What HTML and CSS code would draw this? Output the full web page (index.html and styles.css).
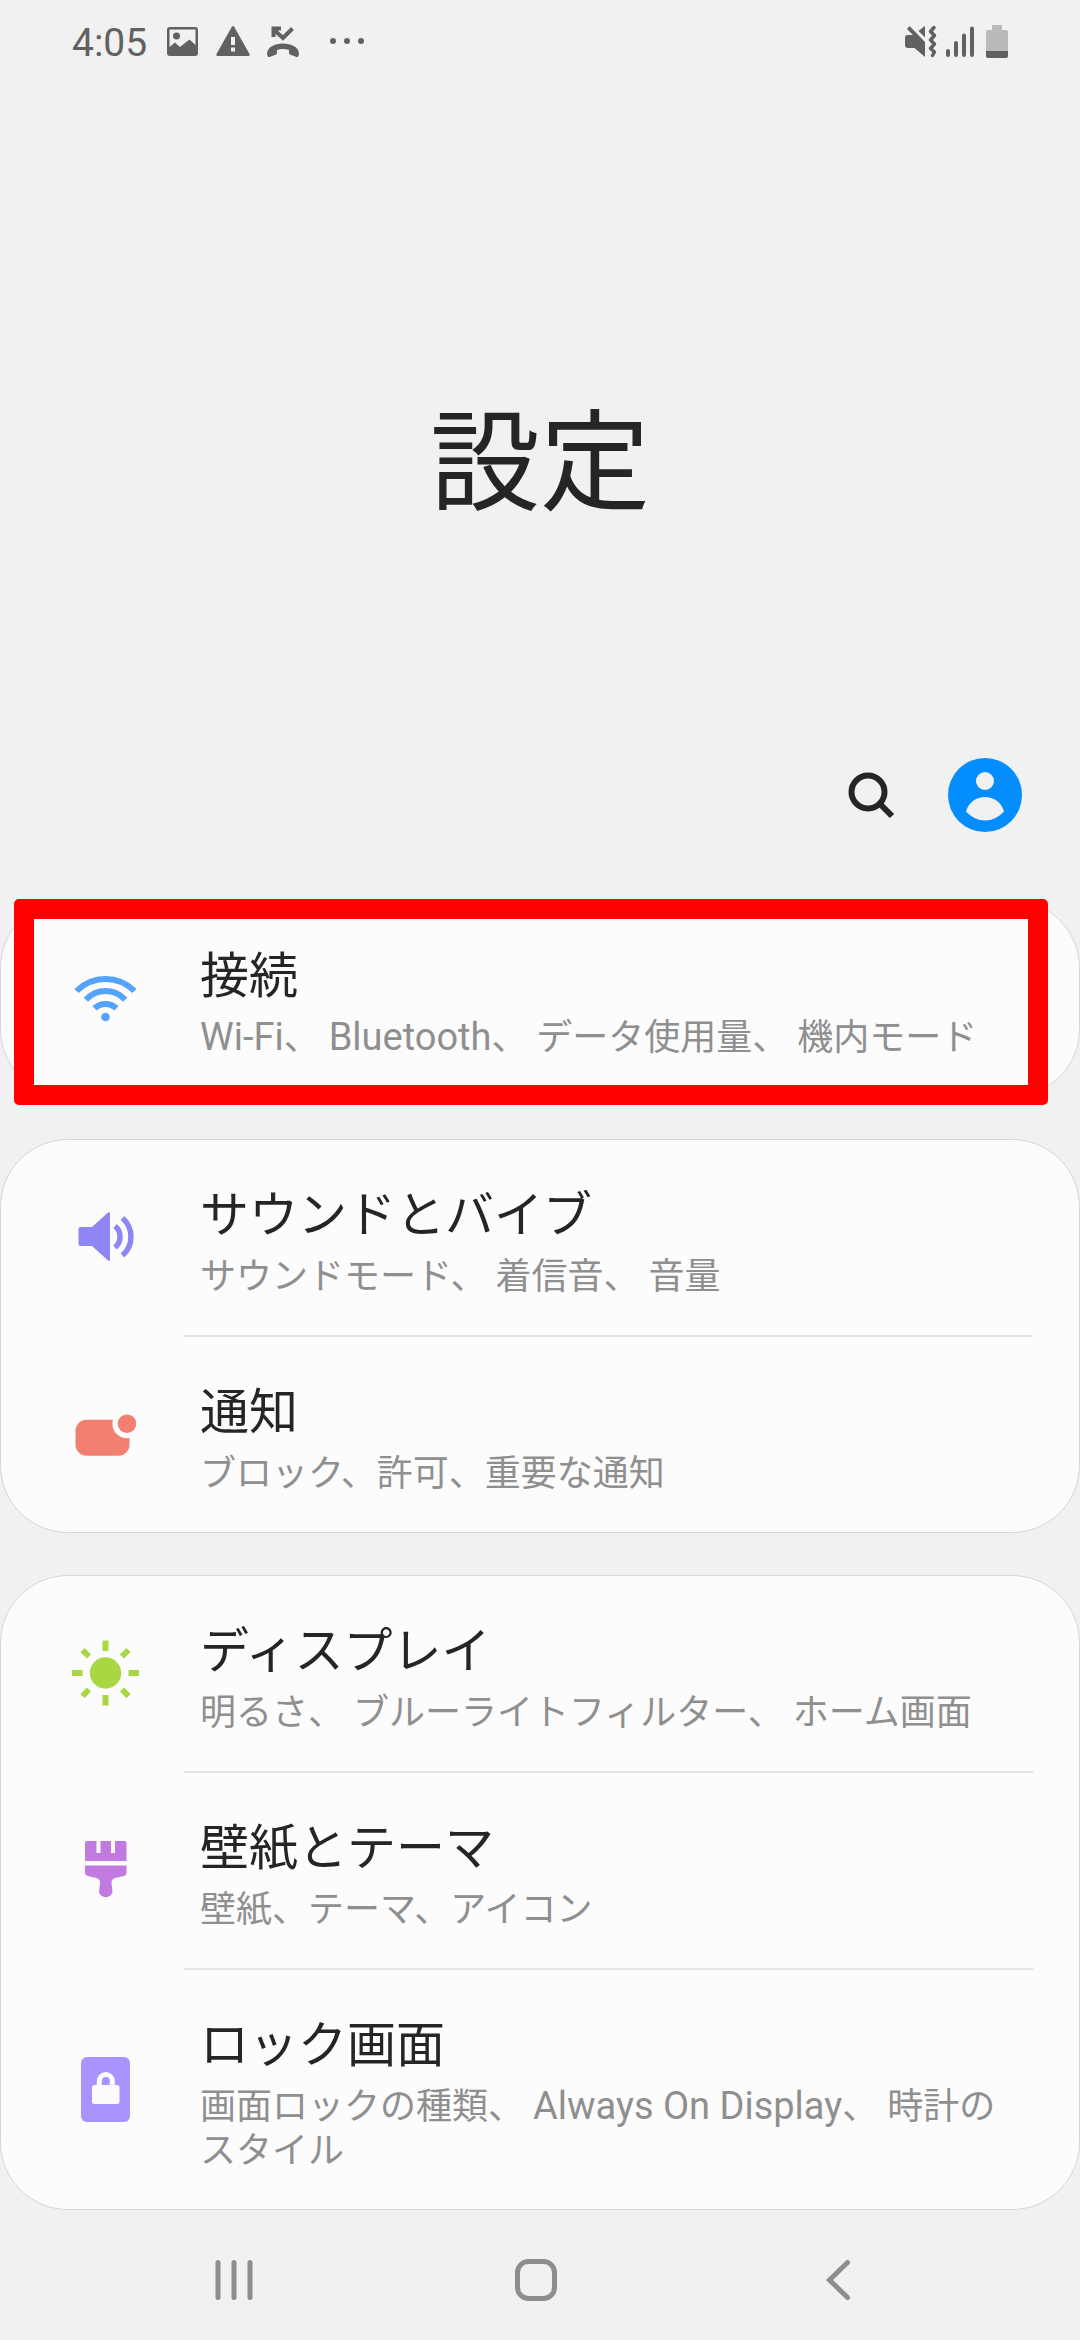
FILE: index.html
```html
<!DOCTYPE html>
<html lang="ja">
<head>
<meta charset="utf-8">
<meta name="viewport" content="width=device-width, initial-scale=1">
<title>設定</title>
<link rel="stylesheet" href="styles.css">
</head>
<body>
<div class="screen">
  <div class="status-bar">
    <span class="clock">4:05</span>
    <div class="status-left">
      <svg width="32" height="34" viewBox="0 0 32 34" aria-hidden="true">
        <path fill-rule="evenodd" d="M3 2H28a3 3 0 0 1 3 3V28a3 3 0 0 1-3 3H3a3 3 0 0 1-3-3V5a3 3 0 0 1 3-3ZM2.500 4.500V22L8 17.500 13 22 22.500 14.500 28.500 20V4.500Z"/>
        <circle cx="9.500" cy="11" r="3.500"/>
      </svg>
      <svg width="34" height="34" viewBox="0 0 34 34" aria-hidden="true">
        <path fill-rule="evenodd" d="M16 1.500a1.300 1.300 0 0 1 2 0L33.500 29a1.300 1.300 0 0 1-1 2H1.500a1.300 1.300 0 0 1-1-2ZM15 12V20H19V12ZM15 22.500V26.500H19V22.500Z"/>
      </svg>
      <svg width="32" height="34" viewBox="0 0 32 34" aria-hidden="true">
        <path d="M6 4 16 13 25.500 3.500M6.500 12V3.500H14" fill="none" stroke="currentColor" stroke-width="4"/>
        <path d="M0 29C0 15 32 15 32 29L31.500 31C31.200 32 30.500 32.200 29.500 31.900L24 30C22.500 29.500 22 29 22 27.500V25C18 23.700 14 23.700 10 25V27.500C10 29 9.500 29.500 8 30L2.500 31.900C1.500 32.200 .8 32 .5 31Z"/>
      </svg>
      <svg class="dots" width="34" height="34" viewBox="0 0 34 34" aria-hidden="true">
        <circle cx="3" cy="16" r="3"/><circle cx="17" cy="16" r="3"/><circle cx="31" cy="16" r="3"/>
      </svg>
    </div>
    <div class="status-right">
      <svg width="32" height="34" viewBox="0 0 32 34" aria-hidden="true">
        <path d="M0 13a3 3 0 0 1 3-3H8L2 4 4.500 1 20 17V32L9.500 23H3a3 3 0 0 1-3-3ZM13.500 6 19 1.500Q20 1 20 2V12.500Z"/>
        <path d="M29 2.500 25.500 6.500 29.500 10.500 25.500 15 29.500 19 25.500 23.500 29.500 27 27.500 30.500" fill="none" stroke="currentColor" stroke-width="3.500" stroke-linecap="round" stroke-linejoin="round"/>
      </svg>
      <svg width="28" height="34" viewBox="0 0 28 34" aria-hidden="true">
        <path d="M2 26V30M10 18V30M18 10.500V30M26 3.500V30" fill="none" stroke="currentColor" stroke-width="4" stroke-linecap="round"/>
      </svg>
      <svg class="battery" width="22" height="34" viewBox="0 0 22 34" aria-hidden="true">
        <path class="battery-body" d="M6 1Q6 0 7 0H15Q16 0 16 1V5H20Q22 5 22 7V26H0V7Q0 5 2 5H6Z"/>
        <path d="M0 26H22V31Q22 33 20 33H2Q0 33 0 31Z"/>
      </svg>
    </div>
  </div>

  <header class="header">
    <h1 class="page-title">設定</h1>
    <div class="actions">
      <button class="action" type="button" aria-label="検索">
        <svg width="74" height="74" viewBox="0 0 74 74" aria-hidden="true">
          <circle cx="33" cy="34" r="16.500" fill="none" stroke="#252525" stroke-width="6"/>
          <path d="M44.500 45.500 57 58" stroke="#252525" stroke-width="6"/>
        </svg>
      </button>
      <button class="action" type="button" aria-label="アカウント">
        <svg width="74" height="74" viewBox="0 0 74 74" aria-hidden="true">
          <circle cx="37" cy="37" r="37" fill="#048dff"/>
          <circle cx="37" cy="23" r="9" fill="#f1f1f1"/>
          <path d="M18 53.500C23 34 51 34 56 53.500Q48 62.500 37 62.500T18 53.500Z" fill="#f1f1f1"/>
        </svg>
      </button>
    </div>
  </header>

  <main class="groups">
    <section class="card">
      <a class="row" href="#connections">
        <svg class="icon" viewBox="0 0 73 73" aria-hidden="true">
          <g fill="none" stroke="#54a3ff" stroke-width="6">
            <path d="M7.500 29A41 41 0 0 1 65.500 29"/>
            <path d="M16.800 37.700A26.700 26.700 0 0 1 56.200 37.700"/>
            <path d="M25.500 46.300A16 16 0 0 1 47.500 46.300"/>
          </g>
          <circle cx="36.500" cy="55" r="4.300" fill="#54a3ff"/>
        </svg>
        <span class="text">
          <span class="title">接続</span>
          <span class="desc"><span class="latin">Wi-Fi</span>、 <span class="latin">Bluetooth</span>、 データ使用量、 機内モード</span>
        </span>
      </a>
      <div class="highlight"></div>
    </section>

    <section class="card">
      <a class="row" href="#sound">
        <svg class="icon" viewBox="0 0 73 73" aria-hidden="true">
          <path d="M11.500 26H23L39 11.500Q41 10.500 41 12.500V58.500Q41 60.500 39 59.500L23 45H11.500Q9.500 45 9.500 43V28Q9.500 26 11.500 26Z" fill="#8e86f5"/>
          <g fill="none" stroke="#8e86f5" stroke-width="5.500">
            <path d="M46 25A14 14 0 0 1 46 46.500"/>
            <path d="M53.500 17A25 25 0 0 1 53.500 54.500"/>
          </g>
        </svg>
        <span class="text">
          <span class="title">サウンドとバイブ</span>
          <span class="desc">サウンドモード、 着信音、 音量</span>
        </span>
      </a>
      <a class="row" href="#notifications">
        <svg class="icon" viewBox="0 0 73 73" aria-hidden="true">
          <rect x="6.500" y="21.700" width="54" height="36" rx="11" fill="#f28072"/>
          <circle cx="58" cy="25.700" r="14.600" fill="#fcfcfc"/>
          <circle cx="58" cy="25.700" r="9.300" fill="#f28072"/>
        </svg>
        <span class="text">
          <span class="title">通知</span>
          <span class="desc">ブロック、許可、重要な通知</span>
        </span>
      </a>
    </section>

    <section class="card">
      <a class="row" href="#display">
        <svg class="icon" viewBox="0 0 73 73" aria-hidden="true">
          <circle cx="36.500" cy="36" r="15.700" fill="#a9d742"/>
          <path d="M36.500 3.500V14M36.500 58V68.500M3 36H13.500M59.500 36H70M13.500 13 20 19.500M53 52.500 59.500 59M59.500 13 53 19.500M20 52.500 13.500 59" stroke="#a9d742" stroke-width="6"/>
        </svg>
        <span class="text">
          <span class="title">ディスプレイ</span>
          <span class="desc">明るさ、 ブルーライトフィルター、 ホーム画面</span>
        </span>
      </a>
      <a class="row" href="#wallpaper">
        <svg class="icon" viewBox="0 0 73 73" aria-hidden="true">
          <path d="M18 7H27.500V19H31.500V7H42V19H46V7H55.500Q57.500 7 57.500 9V27H16V9Q16 7 18 7Z" fill="#c17ae0"/>
          <path d="M16 31.500H57.500V39Q57.500 41 55 42L46 44Q42.500 45 42.500 48.500L43.500 58A7 7 0 0 1 30 58L31 48.500Q31 45 27.500 44L18.500 42Q16 41 16 39Z" fill="#c17ae0"/>
        </svg>
        <span class="text">
          <span class="title">壁紙とテーマ</span>
          <span class="desc">壁紙、テーマ、アイコン</span>
        </span>
      </a>
      <a class="row" href="#lockscreen">
        <svg class="icon" viewBox="0 0 73 73" aria-hidden="true">
          <rect x="12" y="4" width="49" height="65" rx="6" fill="#a893ff"/>
          <rect x="23" y="32" width="27.500" height="19" rx="2.500" fill="#fcfcfc"/>
          <path d="M30.300 34V28A6.500 6.500 0 0 1 43.300 28V34" fill="none" stroke="#fcfcfc" stroke-width="5"/>
        </svg>
        <span class="text">
          <span class="title">ロック画面</span>
          <span class="desc">画面ロックの種類、 <span class="latin">Always On Display</span>、 時計のスタイル</span>
        </span>
      </a>
    </section>
  </main>

  <nav class="nav-bar">
    <button class="nav-button" type="button" aria-label="履歴">
      <svg width="44" height="44" viewBox="0 0 44 44" aria-hidden="true"><path d="M6 4.500V39.500M22 4.500V39.500M38 4.500V39.500"/></svg>
    </button>
    <button class="nav-button" type="button" aria-label="ホーム">
      <svg width="44" height="44" viewBox="0 0 44 44" aria-hidden="true"><rect x="3.500" y="3.500" width="37" height="37" rx="11"/></svg>
    </button>
    <button class="nav-button" type="button" aria-label="戻る">
      <svg width="44" height="44" viewBox="0 0 44 44" aria-hidden="true"><path d="M31.500 4.500 13.500 22 31.500 39.500"/></svg>
    </button>
  </nav>
</div>
</body>
</html>
```
FILE: styles.css
```css
* {
  box-sizing: border-box;
}

body {
  margin: 0;
  background: #f1f1f1;
  color: #252525;
  font-family: Roboto, "Noto Sans CJK JP", sans-serif;
}

svg {
  display: block;
  flex: none;
}

button {
  padding: 0;
  border: 0;
  background: none;
  cursor: pointer;
}

.screen {
  display: flex;
  flex-direction: column;
  min-height: 100vh;
}

.status-bar {
  display: flex;
  align-items: center;
  height: 84px;
  padding: 0 72px;
  color: #616161;
}

.status-bar svg {
  fill: currentColor;
}

.clock {
  padding-top: 2px;
  font-size: 39px;
  line-height: 48px;
}

.status-left,
.status-right {
  display: flex;
}

.status-left {
  gap: 17px;
  margin-left: 20px;
}

.status-left .dots {
  margin-left: 14px;
}

.status-right {
  gap: 9px;
  margin-left: auto;
}

.status-right .battery {
  margin-left: 3px;
}

.battery .battery-body {
  fill: #bababa;
}

.header {
  display: flex;
  flex-direction: column;
  padding: 301px 58px 68px;
}

.page-title {
  margin: 0;
  font-size: 110px;
  font-weight: 400;
  line-height: 160px;
  text-align: center;
}

.actions {
  display: flex;
  justify-content: flex-end;
  gap: 39px;
  margin-top: 213px;
}

.groups {
  display: flex;
  flex-direction: column;
  gap: 42px;
}

.card {
  position: relative;
  border: 1px solid #d6d6d6;
  border-radius: 68px;
  background: #fcfcfc;
}

.row {
  display: flex;
  align-items: center;
  padding: 0 68px;
  color: inherit;
  text-decoration: none;
}

.row + .row {
  padding-top: 2px;
}

.row + .row::before {
  content: "";
  position: absolute;
  left: 183px;
  right: 46px;
  height: 2px;
  margin-top: -2px;
  background: #e4e4e4;
  align-self: flex-start;
}

.icon {
  width: 73px;
  height: 73px;
}

.text {
  display: flex;
  flex-direction: column;
  gap: 6px;
  flex: 1;
  margin-left: 58px;
  padding: 43px 0 36px;
}

.title {
  font-size: 49px;
  line-height: 66px;
}

.desc {
  color: #8f8f8f;
  font-size: 36px;
  line-height: 44px;
}

.latin {
  font-size: 38px;
  line-height: 32px;
}

.highlight {
  position: absolute;
  top: -2px;
  right: 31px;
  bottom: -9px;
  left: 13px;
  border: 20px solid #ff0000;
  border-radius: 5px;
  pointer-events: none;
}

.nav-bar {
  display: flex;
  flex: 1;
  align-items: center;
  min-height: 120px;
  padding: 10px 91px 0 83px;
}

.nav-button {
  display: flex;
  flex: 1;
  justify-content: center;
}

.nav-button svg {
  fill: none;
  stroke: #8e8e8e;
  stroke-width: 5;
  stroke-linecap: round;
}
```
